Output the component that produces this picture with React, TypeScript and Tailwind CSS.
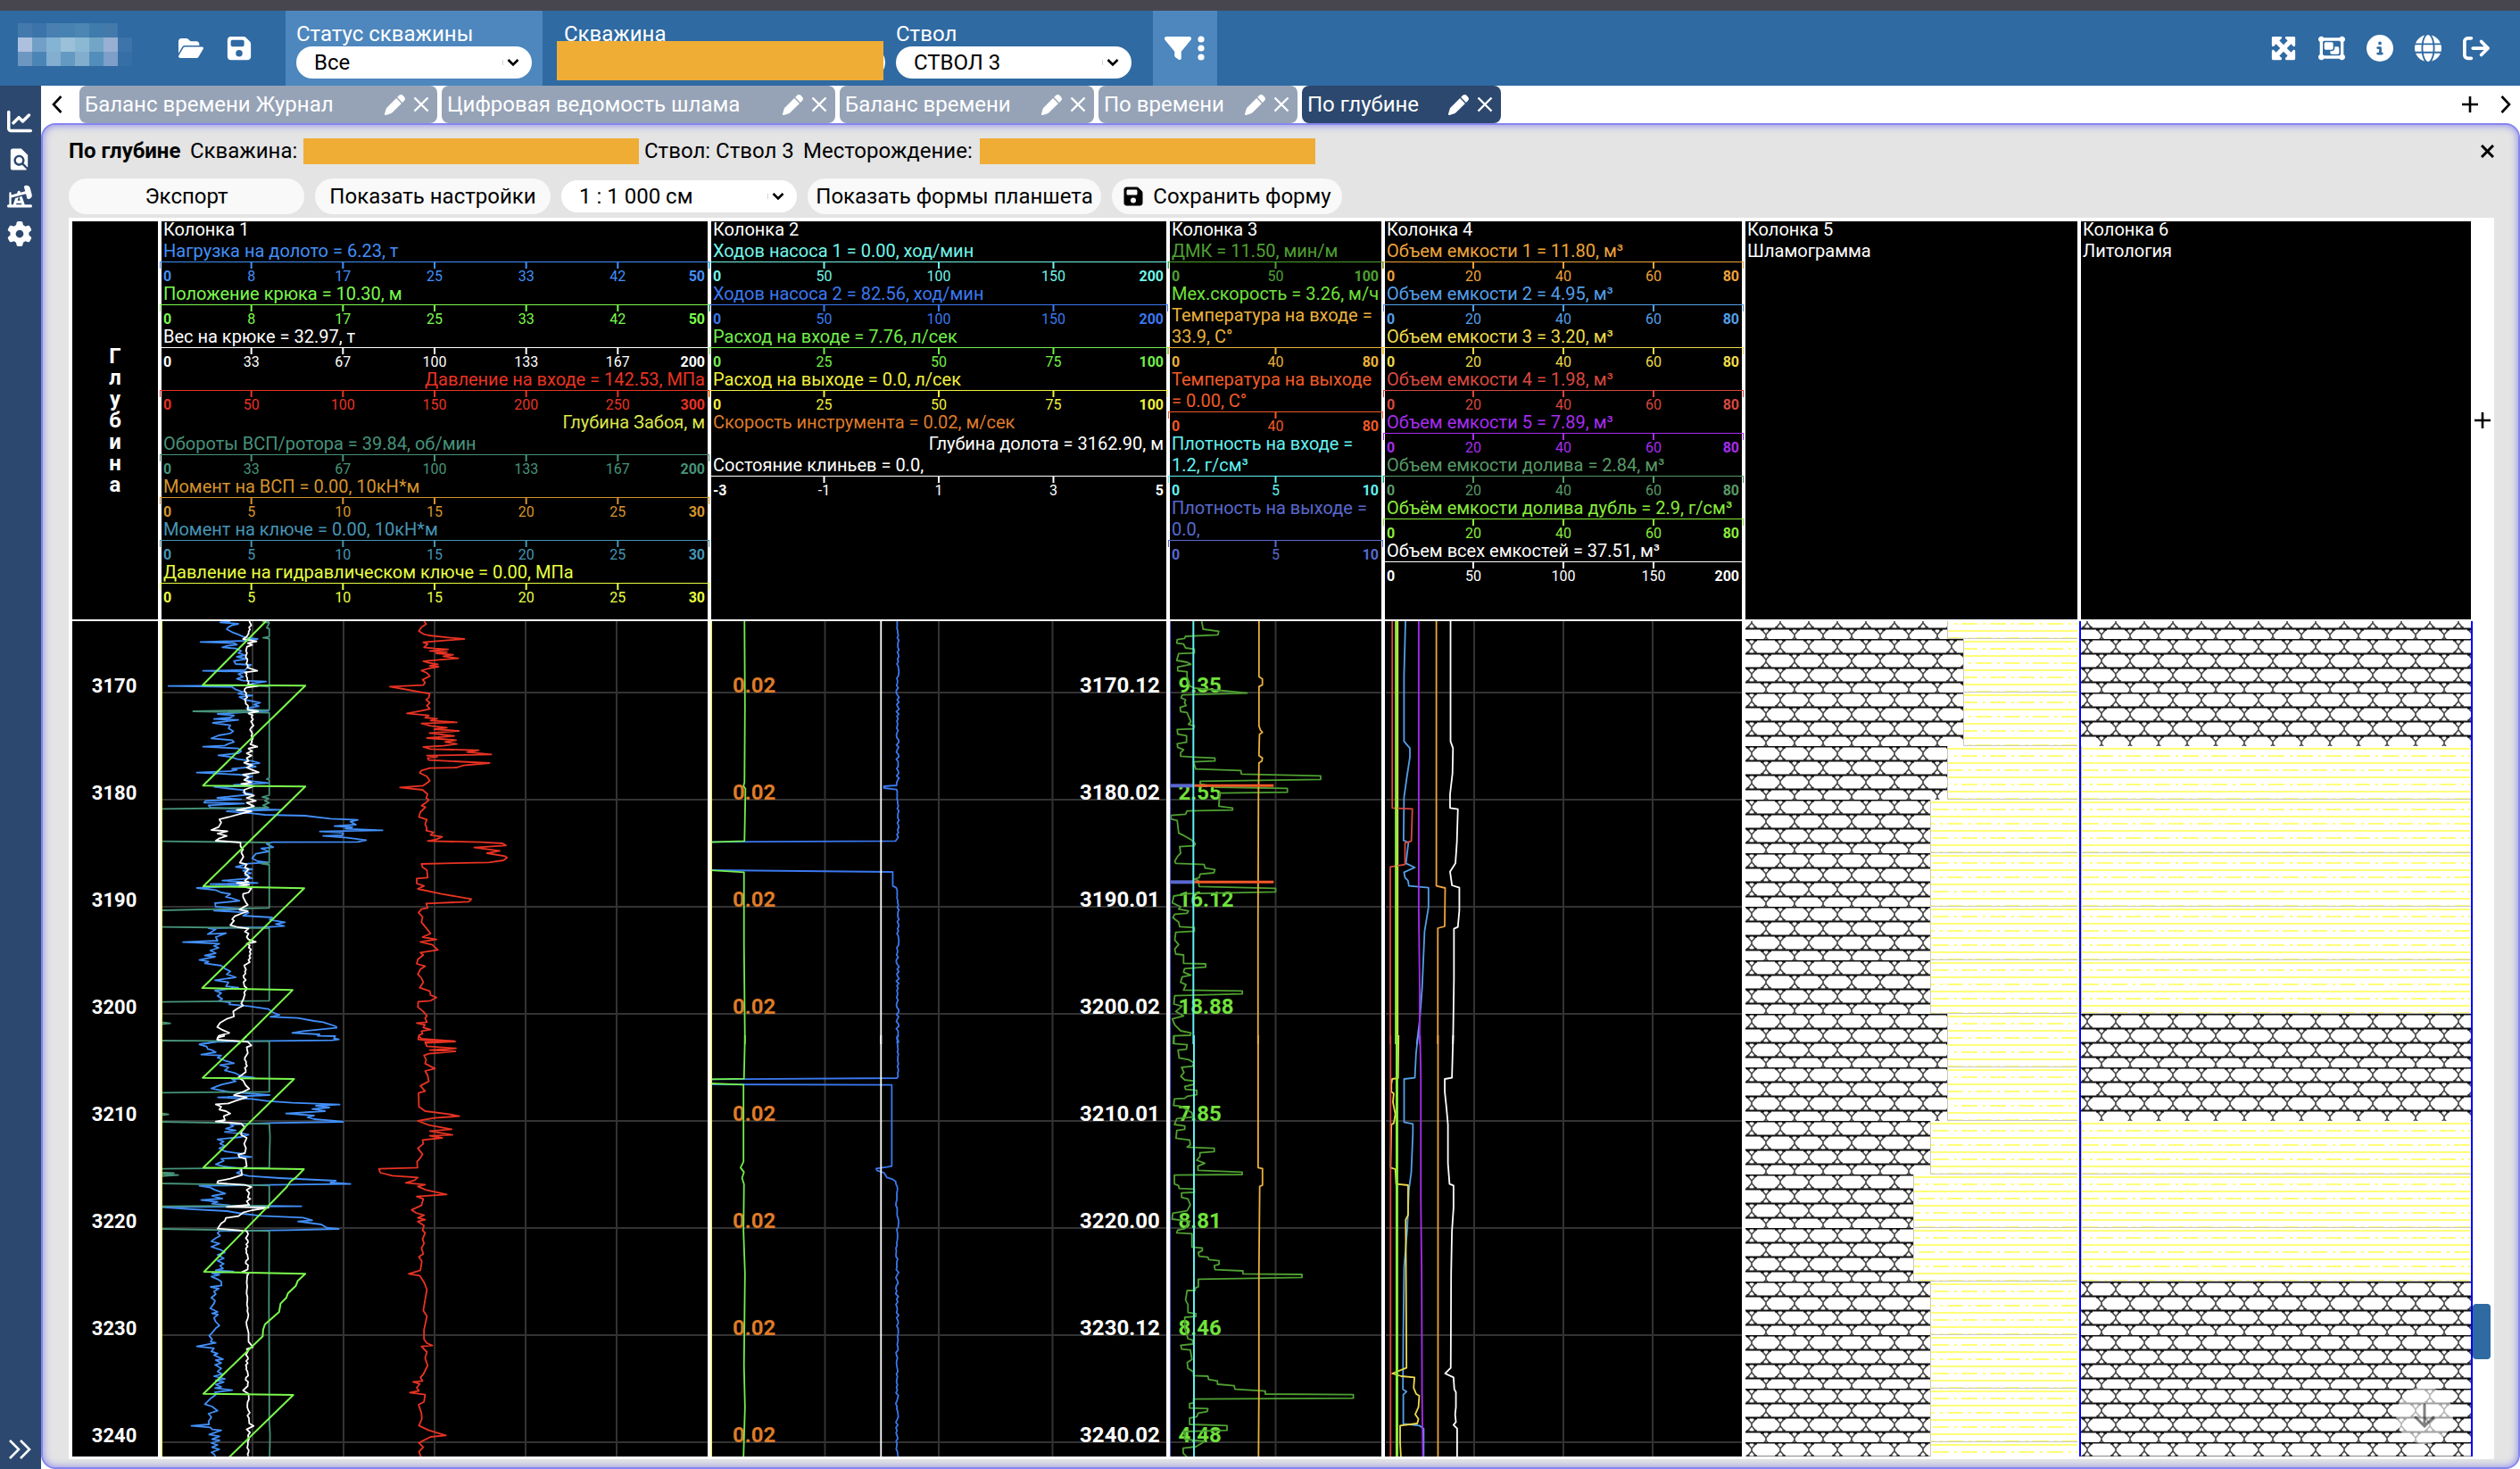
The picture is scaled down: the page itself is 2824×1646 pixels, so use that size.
import type { ReactNode } from "react";
import {
  FaArrowRightFromBracket,
  FaChartLine,
  FaCircleInfo,
  FaFilter,
  FaFloppyDisk,
  FaFolderOpen,
  FaGear,
  FaGlobe,
  FaMaximize,
  FaObjectGroup,
  FaOilWell,
  FaPen,
} from "react-icons/fa6";
import { MdFindInPage } from "react-icons/md";
import { clsx } from "clsx";

type Param = {
  label: string;
  color: string;
  ticks?: string[];
  right?: boolean;
};

type Curve = { color: string; width?: number; upper?: string; lower?: string };

const tabs = [
  { name: "Баланс времени Журнал", width: "w-[401px]" },
  { name: "Цифровая ведомость шлама", width: "w-[441px]" },
  { name: "Баланс времени", width: "w-[285px]" },
  { name: "По времени", width: "w-[223px]" },
  { name: "По глубине", width: "w-[223px]", active: true },
];

const logoCells = [
  "#4379ad", "#3b74aa", "#4a80b1", "#4683b2", "#4c86b3", "#3f7cad", "#4379ab", "#2f6aa2",
  "#adc1de", "#729fc8", "#85b3d3", "#9bc1d8", "#8bb8d3", "#73a6c6", "#98b0d3", "#3d74a9",
  "#6d97c0", "#4a85b5", "#83aed0", "#6499c1", "#83adcd", "#528ebb", "#7d9fc9", "#366fa5",
];

const t50 = ["0", "8", "17", "25", "33", "42", "50"];
const t200 = ["0", "33", "67", "100", "133", "167", "200"];
const t30 = ["0", "5", "10", "15", "20", "25", "30"];
const t80 = ["0", "20", "40", "60", "80"];

const column1: Param[] = [
  { label: "Нагрузка на долото = 6.23, т", color: "#428ff8", ticks: t50 },
  { label: "Положение крюка = 10.30, м", color: "#7bf94d", ticks: t50 },
  { label: "Вес на крюке = 32.97, т", color: "#ffffff", ticks: t200 },
  {
    label: "Давление на входе = 142.53, МПа",
    color: "#e93323",
    ticks: ["0", "50", "100", "150", "200", "250", "300"],
    right: true,
  },
  { label: "Глубина Забоя, м", color: "#dce64a", right: true },
  { label: "Обороты ВСП/ротора = 39.84, об/мин", color: "#47937a", ticks: t200 },
  { label: "Момент на ВСП = 0.00, 10кН*м", color: "#d6942d", ticks: t30 },
  { label: "Момент на ключе = 0.00, 10кН*м", color: "#4695b5", ticks: t30 },
  { label: "Давление на гидравлическом ключе = 0.00, МПа", color: "#e8ff3f", ticks: t30 },
];

const column2: Param[] = [
  { label: "Ходов насоса 1 = 0.00, ход/мин", color: "#72f6ea", ticks: ["0", "50", "100", "150", "200"] },
  { label: "Ходов насоса 2 = 82.56, ход/мин", color: "#3b78f0", ticks: ["0", "50", "100", "150", "200"] },
  { label: "Расход на входе = 7.76, л/сек", color: "#73ee4b", ticks: ["0", "25", "50", "75", "100"] },
  { label: "Расход на выходе = 0.0, л/сек", color: "#f2f03c", ticks: ["0", "25", "50", "75", "100"] },
  { label: "Скорость инструмента = 0.02, м/сек", color: "#df7b28" },
  { label: "Глубина долота = 3162.90, м", color: "#ffffff", right: true },
  { label: "Состояние клиньев = 0.0,", color: "#ffffff", ticks: ["-3", "-1", "1", "3", "5"] },
];

const column3: Param[] = [
  { label: "ДМК = 11.50, мин/м", color: "#4fa032", ticks: ["0", "50", "100"] },
  { label: "Мех.скорость = 3.26, м/ч", color: "#71e23c" },
  { label: "Температура на входе = 33.9, C°", color: "#eab13c", ticks: ["0", "40", "80"] },
  { label: "Температура на выходе = 0.00, C°", color: "#f05a28", ticks: ["0", "40", "80"] },
  { label: "Плотность на входе = 1.2, г/см³", color: "#62f2f2", ticks: ["0", "5", "10"] },
  { label: "Плотность на выходе = 0.0,", color: "#5969cf", ticks: ["0", "5", "10"] },
];

const column4: Param[] = [
  { label: "Объем емкости 1 = 11.80, м³", color: "#efa33a", ticks: t80 },
  { label: "Объем емкости 2 = 4.95, м³", color: "#539fe8", ticks: t80 },
  { label: "Объем емкости 3 = 3.20, м³", color: "#eddb4b", ticks: t80 },
  { label: "Объем емкости 4 = 1.98, м³", color: "#d9483f", ticks: t80 },
  { label: "Объем емкости 5 = 7.89, м³", color: "#a82cf0", ticks: t80 },
  { label: "Объем емкости долива = 2.84, м³", color: "#589966", ticks: t80 },
  { label: "Объём емкости долива дубль = 2.9, г/см³", color: "#8aec3c", ticks: t80 },
  { label: "Объем всех емкостей = 37.51, м³", color: "#ffffff", ticks: ["0", "50", "100", "150", "200"] },
];

const depths = ["3170", "3180", "3190", "3200", "3210", "3220", "3230", "3240"];
const bitDepths = ["3170.12", "3180.02", "3190.01", "3200.02", "3210.01", "3220.00", "3230.12", "3240.02"];
const speeds = ["9.35", "2.55", "16.12", "18.88", "7.85", "8.81", "8.46", "4.48"];

// small repeatable noise around a vertical line
function wobble(x: number, from: number, to: number, amp: number, step = 7) {
  const out: string[] = [];
  for (let y = from, i = 0; y <= to; y += step, i++) {
    const n = Math.sin(i * 12.9898 + x) * 43758.5453;
    out.push(`${(x + (n - Math.floor(n) - 0.5) * 2 * amp).toFixed(1)},${y}`);
  }
  return out.join(" ");
}

const curves1: Curve[] = [
  {
    color: "#428ff8",
    upper:
      "240,18 212,22 262,27 245,32 235,38 230,45 245,55 260,62 275,70 290,75 315,78 280,84 158,88 250,92 258,97 232,101 218,106 255,110 270,118 262,125 280,132 258,138 285,145 250,152 255,162 297,165 290,172 280,182 165,185 285,188 262,196 275,205 258,212 275,218 338,221 300,228 290,234 70,236 245,239 255,248 275,256 262,262 300,268 265,273 280,282 322,292 305,298 318,304 285,310 300,315 345,320 240,327 205,330 250,335 240,342 195,347 262,350 192,360 240,368 235,378 248,388 240,395 208,402 188,412 245,418 250,424 235,430 225,436 165,440 262,446 270,455 262,462 207,469 240,474 260,482 300,488 320,495 285,500 310,507 245,514 258,518 240,522 148,527 265,534 300,540 280,550 300,556 345,562 250,568 300,572 196,575 245,582 278,586 275,594 300,600 204,612 270,617 172,622 168,628 278,631 180,637 186,645 240,648 380,652 230,657 300,664 335,669 445,672 515,682 590,686 570,692 585,702 526,707 575,711 556,716 658,721 486,725 550,730 548,738 495,740 560,746 613,754 590,760 355,761 340,767 358,778 325,782 345,792 310,800 300,815 315,825 345,829 290,833 255,844 300,852 275,857 297,865 280,872 300,882 218,890 315,898 185,902 285,907 148,915 200,922 215,930 240,935 228,945 245,950 265,958 198,966 200,978 285,985 195,991 290,998 275,1008 355,1014 348,1022 390,1030 365,1036 388,1043 330,1047 180,1050 200,1054 178,1070 228,1067 200,1080 205,1092 110,1097 210,1102 195,1110 208,1116 185,1125 200,1134 170,1142 198,1146 155,1157 180,1162 170,1168 215,1176 225,1186 240,1195 230,1205 255,1215 198,1225 235,1232 228,1245 262,1250 198,1260 215,1268 205,1278 218,1288 208,1295 240,1300 237,1306 290,1312 345,1322 355,1332 375,1342 350,1348 425,1352 470,1362 495,1366 530,1380 532,1385 440,1396 410,1402 485,1407 480,1412 528,1413 525,1420 538,1424 520,1427 347,1429 200,1432 155,1440",
    lower:
      "200,22 155,31 175,38 178,46 190,50 200,57 160,65 215,68 205,75 225,85 250,94 212,100 235,108 225,118 255,128 270,138 305,142 270,146 245,148 255,155 215,166 188,179 235,190 348,201 206,209 300,214 340,221 410,227 540,233 475,237 512,243 465,248 500,255 393,263 470,270 452,276 470,282 520,287 550,291 347,295 240,300 248,306 228,314 255,320 225,325 270,330 290,334 270,342 205,350 222,357 212,364 225,372 210,380 225,390 270,398 265,404 298,409 215,415 222,422 200,434 222,441 262,447 270,455 258,463 290,473 375,480 530,489 515,495 570,500 347,503 155,506 185,512 198,520 226,532 190,540 218,549 160,554 205,560 190,566 240,572 435,575 50,578 120,584 230,591 275,600 325,607 440,613 465,622 426,626 490,636 505,647 538,651 400,655 210,658 205,665 212,674 200,682 188,693 210,700 188,711 215,722 225,730 205,738 222,750 205,758 222,768 212,775 220,784 200,790 248,794 190,800 210,805 188,811 205,820 215,828 216,841 186,846 208,852 195,861 200,870 188,882 198,892 195,902 185,918 205,930 190,935 206,939 195,950 200,963 210,976 200,985 190,1000 182,1010 190,1022 186,1030 200,1034 148,1046 195,1052 188,1063 205,1070 195,1075 220,1089 200,1092 215,1102 198,1108 215,1120 205,1130 218,1139 195,1146 225,1155 200,1160 222,1166 200,1174 215,1182 198,1186 245,1193 198,1200 200,1208 185,1222 170,1240 190,1248 205,1262 180,1272 188,1284 180,1298 182,1308 133,1313 185,1318 190,1325 215,1328 182,1342 210,1348 190,1358 210,1362 188,1371 205,1377 190,1385 210,1392 188,1402 195,1408 200,1418",
  },
  {
    color: "#47937a",
    upper:
      "347,18 330,20 347,24 340,40 347,44 347,70 330,74 347,77 347,234 310,236 347,238 347,316 138,321 347,326 347,545 340,549 347,552 347,603 328,609 345,614 335,622 347,628 330,637 345,645 50,649",
  },
  { color: "#47937a", upper: "50,758 347,762 347,830 325,833 347,837 347,982 50,990" },
  { color: "#47937a", upper: "50,1046 347,1050 347,1294 50,1298" },
  { color: "#47937a", upper: "50,1366 75,1370 50,1373 50,1392", lower: "50,18 347,20 347,190 50,193 50,262 70,266 50,269" },
  { color: "#47937a", lower: "50,291 347,298 349,340 347,445 50,449 50,461 85,463 55,467 97,470 50,474 50,478 50,498 347,505 347,572 50,575" },
  { color: "#47937a", lower: "50,651 347,658 346,900 347,1100 347,1300 349,1340 348,1418" },
  {
    color: "#ffffff",
    upper:
      wobble(295, 18, 62, 5) +
      " 285,70 275,78 312,86 288,92 300,98 " +
      wobble(287, 104, 180, 6) +
      " 314,185 280,190 " +
      wobble(285, 195, 230, 7) +
      " 316,236 285,241 " +
      wobble(283, 246, 316, 6) +
      " 316,321 290,328 " +
      wobble(298, 334, 436, 6) +
      " 314,440 290,446 300,455 285,462 298,470 285,478 290,488 278,494 300,502 285,510 300,518 318,526 275,534 290,542 278,552 298,560 270,565 305,573 278,585 280,598 305,604 285,612 310,622 285,628 305,640 280,648 258,653 298,657 270,665 240,675 210,684 215,695 208,710 188,720 232,724 205,732 230,740 210,748 200,756 " +
      "268,762 268,775 275,785 270,795 276,810 266,830 285,835 280,846 290,852 280,865 292,878 280,890 290,895 258,898 292,904 265,908 298,916 290,930 275,935 275,945 282,962 288,972 275,980 265,988 288,993 268,1002 252,1010 245,1020 250,1025 240,1040 262,1047 290,1051 280,1062 290,1068 285,1080 290,1088 310,1096 285,1102 " +
      wobble(294, 1108, 1170, 5) +
      " " +
      wobble(281, 1175, 1292, 5) +
      " 270,1303 275,1310 260,1320 248,1330 250,1347 230,1355 212,1368 204,1382 215,1390 237,1402 208,1412 204,1426",
    lower:
      "225,2 205,8 204,15 288,22 298,34 285,40 288,60 " +
      wobble(283, 75, 125, 5) +
      " 262,142 275,152 282,168 292,180 275,190 250,201 285,209 255,220 235,229 200,232 215,240 210,250 228,255 240,263 222,272 225,285 200,290 270,297 280,310 270,325 270,335 285,345 278,365 283,380 280,396 262,401 265,410 282,415 285,440 270,450 272,470 240,482 206,490 204,497 280,503 298,510 285,520 292,530 288,545 295,550 285,558 292,570 230,577 345,579 300,588 275,596 262,608 228,614 225,624 215,632 205,650 285,658 " +
      wobble(286, 668, 790, 4) +
      " 272,796 290,801 " +
      wobble(287, 808, 980, 3, 12) +
      " 290,1000 290,1030 302,1048 285,1055 " +
      wobble(286, 1060, 1185, 4) +
      " 275,1194 290,1205 " +
      wobble(290, 1215, 1305, 4, 9) +
      " 304,1313 285,1325 294,1335 " +
      wobble(289, 1345, 1418, 3),
  },
  {
    color: "#7bf94d",
    width: 2,
    upper: "338,18 164,233 446,235 165,571 446,574 166,909 443,916 163,1251 411,1258 262,1440",
    lower:
      "285,2 164,143 415,147 166,445 442,450 420,478 405,492 395,510 168,795 446,802 425,826 420,842 398,868 394,882 378,902 374,930 335,972 330,990 329,1012 166,1205 413,1209 237,1418",
  },
  {
    color: "#e93323",
    upper:
      "772,18 778,28 765,38 758,52 772,62 785,66 845,74 883,78 830,83 770,89 782,95 772,106 802,110 838,113 788,118 835,122 805,126 852,131 825,136 866,143 805,149 770,153 785,158 810,163 788,168 812,171 785,177 765,184 780,192 788,203 768,215 775,224 770,233 678,238 715,246 788,262 785,275 778,282 788,292 780,302 788,313 762,320 725,328 785,335 775,342 808,346 790,352 862,358 765,362 790,370 835,376 800,381 868,387 787,394 855,404 780,411 860,418 830,424 862,431 825,437 770,441 790,448 922,452 890,458 957,466 780,470 808,474 782,478 785,485 952,495 880,503 862,510 788,512 765,520 760,528 780,540 788,555 770,571 706,577 768,585 782,600 778,612 785,620 775,630 765,638 776,643 762,660 758,676 780,685 775,700 780,715 778,722 798,728 790,737 822,743 805,752 782,757 930,761 988,765 997,772 910,779 980,790 945,798 995,808 1000,813 990,822 950,829 830,832 765,834 768,845 780,855 782,880 752,883 752,900 772,908 755,918 820,935 902,952 895,961 778,967 782,982 765,986 757,998 768,1012 765,1030 775,1045 790,1068 768,1080 806,1088 762,1096 795,1106 810,1123 762,1132 770,1140 755,1155 752,1170 775,1178 762,1188 755,1205 765,1218 770,1232 760,1250 788,1262 790,1275 806,1283 790,1294 756,1297 755,1315 770,1330 780,1345 775,1352 780,1366 752,1369 775,1375 770,1384 790,1391 765,1396 768,1405 758,1410 756,1424 775,1427 857,1431 775,1436",
    lower:
      "758,2 765,12 857,20 775,24 780,37 860,44 788,50 858,54 785,62 772,68 778,82 775,95 802,112 775,120 782,135 785,155 762,170 775,188 757,194 758,240 775,255 840,265 869,272 800,278 755,288 785,302 848,316 788,322 850,335 788,338 822,345 768,352 770,365 755,380 768,400 762,412 753,425 754,445 648,449 652,462 685,472 755,478 745,488 722,496 775,502 755,508 778,520 834,535 752,542 770,550 765,572 738,587 750,597 772,605 755,614 775,620 755,626 772,640 768,655 775,665 768,685 772,700 765,715 770,735 758,745 766,760 762,790 730,802 760,808 772,830 780,855 775,890 770,925 780,945 772,990 772,1022 780,1035 795,1043 765,1046 780,1065 775,1085 782,1110 770,1140 762,1150 768,1162 742,1165 760,1172 752,1185 758,1195 733,1201 775,1208 772,1232 757,1242 765,1270 766,1290 758,1312 785,1328 832,1345 790,1350 758,1370 770,1385 758,1400 764,1418",
  },
];

const curves2: Curve[] = [
  {
    color: "#3b78f0",
    upper:
      wobble(394, 18, 570, 3, 8) +
      " 366,573 366,579 392,584 " +
      wobble(394, 592, 745, 3, 8) +
      " 390,757 12,760",
    lower: "12,165 382,167 382,440 372,443 350,448 352,455 366,462 372,478 384,484 390,492 " + wobble(393, 500, 1418, 3, 9),
  },
  {
    color: "#3b78f0",
    upper: "12,855 384,861 384,908 391,914 " + wobble(394, 924, 1440, 3, 8),
    lower: wobble(394, 0, 145, 2, 8) + " 12,148",
  },
  {
    color: "#73ee4b",
    upper: "81,18 82,300 81,560 79,572 83,582 81,757 12,761",
  },
  { color: "#73ee4b", upper: "12,855 80,862 80,1100 82,1440", lower: "82,0 80,146 12,148" },
  { color: "#73ee4b", lower: "12,162 79,166 79,425 73,445 80,460 76,480 80,500 79,660 82,800 80,1110 82,1250 79,1418" },
  { color: "#ffffff", upper: "360,18 360,1440", lower: "360,0 360,1418" },
];

// lower part of tracks 3 and 4 is digitised on a wider grid, see `lowerScale`
const curves3: Curve[] = [
  {
    color: "#4fa032",
    upper:
      "1015,18 1018,45 1050,52 1048,64 982,69 980,76 965,80 964,92 978,95 982,108 1000,112 1000,125 968,127 964,150 985,156 993,163 966,172 966,185 985,188 985,204 990,235 1000,243 1060,252 1108,260 975,266 973,276 982,282 980,292 983,302 971,308 972,322 985,325 990,345 993,355 988,365 1000,370 998,380 965,382 966,398 984,403 984,425 965,430 966,442 978,450 972,460 972,472 1000,475 1042,478 1042,488 998,491 1003,515 1095,520 1096,532 1258,538 1258,550 1012,556 1012,565 1045,576 1190,580 1190,593 1052,596 1050,640 1078,646 1078,653 985,656 982,667 952,671 952,683 965,688 968,730 980,740 993,752 1002,766 1000,773 970,776 972,798 966,808 960,825 962,832 1020,836 1022,848 1042,853 1040,864 1012,868 1010,880 1000,885 1008,890 1010,910 1166,916 1166,928 985,934 958,942 955,965 972,978 968,986 988,992 985,1000 960,1003 956,1015 968,1030 970,1045 1000,1048 1000,1060 962,1064 960,1090 968,1105 960,1120 962,1137 978,1140 978,1168 1023,1170 1023,1181 980,1186 978,1198 993,1208 975,1214 972,1232 983,1240 978,1258 1098,1261 1098,1271 960,1277 958,1305 975,1312 962,1330 978,1345 955,1355 960,1375 972,1395 993,1402 992,1410 958,1412 957,1440",
    lower:
      "35,0 35,28 68,32 66,47 45,50 48,76 72,82 84,92 82,104 54,108 60,125 52,138 62,150 86,154 85,165 62,172 64,182 92,185 92,200 68,205 62,212 36,214 34,236 50,238 80,260 82,275 42,280 36,300 62,305 62,316 42,320 40,346 74,352 76,368 68,376 136,380 136,391 100,395 100,408 92,420 112,430 95,440 95,454 206,460 206,468 36,470 36,500 46,505 48,515 86,517 86,528 54,530 54,545 70,550 76,570 68,590 32,598 30,618 75,625 62,650 44,655 42,664 80,667 80,712 106,715 106,724 96,730 98,743 120,746 122,754 148,758 148,770 136,774 138,788 208,792 208,802 356,804 356,814 96,820 96,845 88,850 88,858 68,858 64,890 70,905 70,932 90,936 90,945 62,948 62,985 70,1020 82,1025 82,1038 52,1042 54,1055 76,1058 80,1090 68,1100 70,1120 84,1132 84,1144 120,1146 122,1157 144,1162 144,1173 186,1178 188,1190 264,1196 264,1206 485,1208 485,1220 84,1223 84,1236 74,1238 74,1253 120,1255 118,1265 96,1270 92,1282 74,1287 74,1308 168,1312 168,1328 60,1332 62,1358 112,1365 90,1383 58,1388 58,1405 68,1418",
  },
  {
    color: "#eab13c",
    upper: "1132,18 1132,205 1139,212 1139,232 1132,238 1132,370 1135,384 1139,392 1133,398 1132,470 1139,478 1138,488 1132,494 1131,600 1130,1040 1130,1440",
    lower: "246,0 246,445 257,448 257,504 250,508 248,800 248,1210 247,1418",
  },
  { color: "#f05a28", width: 3, upper: "1000,571 1162,571" },
  { color: "#f05a28", width: 3, upper: "1000,895 1162,895" },
  { color: "#5969cf", width: 4, upper: "949,571 1000,571" },
  { color: "#5969cf", width: 4, upper: "949,895 1000,895" },
  { color: "#62f2f2", width: 2, upper: "998,18 998,1440", lower: "85,0 85,1418" },
];

const curves4: Curve[] = [
  {
    color: "#539fe8",
    upper:
      "1431,18 1428,200 1428,422 1440,445 1440,475 1434,540 1428,610 1427,755 1437,762 1432,832 1450,846 1428,862 1430,880 1436,890 1438,908 1478,914 1478,980 1470,1060 1465,1250 1460,1360 1454,1440",
    lower:
      "647,0 642,60 639,143 612,147 612,292 634,298 634,330 630,460 624,520 620,650 612,780 610,1000 609,1190 618,1198 610,1208 610,1306 650,1312 661,1322 661,1418",
  },
  {
    color: "#a82cf0",
    upper: "1458,18 1458,980 1460,1250 1460,1440",
    lower: "652,0 654,140 654,560 656,800 657,1200 659,1418",
  },
  {
    color: "#eddb4b",
    upper: "1415,18 1415,1440",
    lower:
      "598,0 597,144 582,147 580,165 580,190 586,196 584,225 590,265 586,296 580,300 578,445 590,450 592,500 622,504 622,605 616,620 618,1118 582,1137 605,1146 638,1150 636,1185 642,1205 650,1212 648,1250 640,1274 648,1290 645,1305 602,1312 602,1370 604,1418",
  },
  {
    color: "#d9483f",
    upper: "1404,18 1404,646 1445,649 1443,757 1430,764 1430,836 1400,844 1400,1440",
    lower: "578,0 578,1418",
  },
  { color: "#8aec3c", width: 3, upper: "1412,18 1412,1440", lower: "594,0 594,1418" },
  {
    color: "#efa33a",
    upper: "1494,18 1494,908 1512,915 1511,1044 1497,1050 1497,1440",
    lower: "697,0 697,1418",
  },
  {
    color: "#ffffff",
    upper:
      "1523,18 1523,422 1528,445 1527,530 1522,600 1522,646 1538,650 1536,760 1533,832 1522,860 1526,906 1541,914 1541,990 1538,1046 1530,1052 1530,1220 1528,1440",
    lower:
      "735,0 732,143 714,147 714,190 718,240 722,300 722,430 726,500 736,505 736,580 732,660 730,800 729,1118 715,1137 736,1150 738,1190 742,1200 742,1250 740,1275 742,1300 736,1310 745,1322 745,1418",
  },
];

// x of the boundary between limestone and sand, one value per 5 m sample
const cuttings = [226, 244, 244, 226, 207, 207, 207, 207, 226, 226, 207, 188, 188, 207, 207, 207, 207];
const lithology = [437, 437, 437, 0, 0, 0, 0, 0, 437, 437, 0, 0, 0, 437, 437, 437, 437];

type SelectProps = { id: string; options: string[]; className?: string; label?: string };

function Select({ id, options, className, label }: SelectProps) {
  return (
    <div className={clsx("grid h-9 items-center", className)}>
      <select
        id={id}
        aria-label={label}
        className="[grid-area:1/1] h-9 w-full appearance-none rounded-full bg-white pl-5 pr-10 text-2xl leading-8 text-black"
      >
        {options.map((o) => (
          <option key={o}>{o}</option>
        ))}
      </select>
      <span className="[grid-area:1/1] pointer-events-none mr-3.5 flex items-center gap-1 justify-self-end">
        <i className="h-1.5 w-px bg-gray-300" />
        <svg width="14" height="10" viewBox="0 0 14 10" fill="none" stroke="#000" strokeWidth="2.6">
          <path d="M1.5 2 7 7.5 12.5 2" />
        </svg>
      </span>
    </div>
  );
}

function HeaderField({ id, label, options }: { id: string; label: string; options: string[] }) {
  return (
    <div className="flex flex-col">
      <label htmlFor={id} className="h-7 text-2xl leading-7 text-white">
        {label}
      </label>
      <Select id={id} options={options} className="w-full" />
    </div>
  );
}

function IconButton({ label, className, children }: { label: string; className?: string; children: ReactNode }) {
  return (
    <button type="button" aria-label={label} className={clsx("flex items-center justify-center", className)}>
      {children}
    </button>
  );
}

function Header() {
  return (
    <header className="flex h-[84px] items-stretch bg-[#2f6aa2] text-white">
      <div className="flex w-80 items-center pl-5">
        <div className="grid grid-cols-[repeat(8,16px)] grid-rows-[repeat(3,16px)] pb-2">
          {logoCells.map((c, i) => (
            <span key={i} style={{ backgroundColor: c }} />
          ))}
        </div>
        <IconButton label="Открыть" className="ml-[50px] w-8">
          <FaFolderOpen size={28} />
        </IconButton>
        <IconButton label="Сохранить" className="ml-6 w-7">
          <FaFloppyDisk size={30} />
        </IconButton>
      </div>
      <div className="w-72 bg-[#4d87be] px-3 pt-3">
        <HeaderField id="status" label="Статус скважины" options={["Все"]} />
      </div>
      <div className="ml-6 w-[360px] pt-3">
        <div className="relative">
          <HeaderField id="well" label="Скважина" options={[""]} />
          <span className="absolute -left-2 top-[22px] h-11 w-[366px] bg-[#efad36]" />
        </div>
      </div>
      <div className="ml-3 w-[264px] pt-3">
        <HeaderField id="bore" label="Ствол" options={["СТВОЛ 3"]} />
      </div>
      <IconButton label="Фильтр" className="ml-6 w-[72px] gap-1.5 bg-[#4d87be]">
        <FaFilter size={30} />
        <svg width="10" height="28" viewBox="0 0 10 28" fill="#fff">
          <circle cx="5" cy="4" r="3.6" />
          <circle cx="5" cy="14" r="3.6" />
          <circle cx="5" cy="24" r="3.6" />
        </svg>
      </IconButton>
      <div className="ml-auto flex items-center gap-6 pr-[34px]">
        <IconButton label="На весь экран" className="w-[30px]">
          <FaMaximize size={30} />
        </IconButton>
        <IconButton label="Группировка" className="w-[30px]">
          <FaObjectGroup size={30} />
        </IconButton>
        <IconButton label="Информация" className="w-[30px]">
          <FaCircleInfo size={30} />
        </IconButton>
        <IconButton label="Язык" className="w-[30px]">
          <FaGlobe size={30} />
        </IconButton>
        <IconButton label="Выход" className="w-[30px]">
          <FaArrowRightFromBracket size={30} />
        </IconButton>
      </div>
    </header>
  );
}

function Sidebar() {
  return (
    <nav className="flex w-[46px] shrink-0 flex-col items-center gap-3.5 bg-[#2c486e] pb-2 pr-[3px] pt-[26px] text-white">
      <IconButton label="Графики" className="h-7">
        <FaChartLine size={28} />
      </IconButton>
      <IconButton label="Поиск" className="h-7">
        <MdFindInPage size={29} />
      </IconButton>
      <IconButton label="Буровая" className="h-7">
        <FaOilWell size={28} />
      </IconButton>
      <IconButton label="Настройки" className="h-7">
        <FaGear size={28} />
      </IconButton>
      <IconButton label="Развернуть" className="mt-auto h-7">
        <svg width="28" height="24" viewBox="0 0 28 24" fill="none" stroke="#fff" strokeWidth="2.6">
          <path d="M3 2l10 10L3 22M15 2l10 10-10 10" />
        </svg>
      </IconButton>
    </nav>
  );
}

function TabBar() {
  return (
    <div className="flex h-[42px] items-stretch bg-white">
      <IconButton label="Назад" className="w-[39px] pr-1">
        <svg width="12" height="20" viewBox="0 0 12 20" fill="none" stroke="#000" strokeWidth="2.6">
          <path d="M10.5 1 2 10l8.5 9" />
        </svg>
      </IconButton>
      <div className="ml-1 flex gap-[5px]">
        {tabs.map((tab) => (
          <div
            key={tab.name}
            className={clsx(
              "flex items-center rounded-lg pl-1.5 pr-2 text-2xl text-white",
              tab.width,
              tab.active ? "bg-[#2c486e]" : "bg-[#96a3b7]"
            )}
          >
            <a href="#" className="whitespace-nowrap">
              {tab.name}
            </a>
            <IconButton label="Изменить" className="ml-auto w-6">
              <FaPen size={23} />
            </IconButton>
            <IconButton label="Закрыть" className="ml-2 w-5">
              <svg width="18" height="18" viewBox="0 0 18 18" stroke="currentColor" strokeWidth="2.4">
                <path d="M1.5 1.5l15 15M16.5 1.5l-15 15" />
              </svg>
            </IconButton>
          </div>
        ))}
      </div>
      <IconButton label="Добавить" className="ml-auto w-6">
        <svg width="18" height="18" viewBox="0 0 18 18" stroke="#000" strokeWidth="2.6">
          <path d="M9 0v18M0 9h18" />
        </svg>
      </IconButton>
      <IconButton label="Вперёд" className="ml-5 mr-2 w-4">
        <svg width="12" height="20" viewBox="0 0 12 20" fill="none" stroke="#000" strokeWidth="2.6">
          <path d="M1.5 1 10 10l-8.5 9" />
        </svg>
      </IconButton>
    </div>
  );
}

function Axis({ ticks, color }: { ticks: string[]; color: string }) {
  const last = ticks.length - 1;
  return (
    <div className="-mx-0.5">
      <svg className="block h-6 w-full overflow-visible" fill={color} stroke="none" fontSize="16">
        <rect width="100%" height="1" />
        {ticks.map((t, i) => {
          const edge = i === 0 || i === last;
          return (
            <g key={i} transform={i === 0 ? undefined : "translate(-1 0)"}>
              <rect x={`${(i / last) * 100}%`} width={edge ? 1 : 2} height="8" />
              <text
                x={`${(i / last) * 100}%`}
                dx={i === 0 ? 4 : i === last ? -4 : 1}
                y="22"
                textAnchor={i === 0 ? "start" : i === last ? "end" : "middle"}
                fontWeight={edge ? 700 : 400}
              >
                {t}
              </text>
            </g>
          );
        })}
      </svg>
    </div>
  );
}

function TrackHeader({ title, params = [], note }: { title: string; params?: Param[]; note?: string }) {
  return (
    <div className="min-h-[446px] min-w-0 bg-black text-xl leading-6 text-white">
      <div className="h-[21px] px-0.5 leading-[18px]">{title}</div>
      {note && <div className="px-0.5">{note}</div>}
      {params.map((p) => (
        <div key={p.label} style={{ color: p.color }}>
          <div className={p.right ? "pr-[3px] text-right" : "pl-0.5"}>{p.label}</div>
          {p.ticks && <Axis ticks={p.ticks} color={p.color} />}
        </div>
      ))}
    </div>
  );
}

type TrackProps = {
  viewBox: string;
  curves: Curve[];
  divisions: number;
  lowerScale?: string;
  edge: string;
  children?: ReactNode;
};

function Track({ viewBox, curves, divisions, lowerScale, edge, children }: TrackProps) {
  return (
    <div className="h-[936px] min-w-0 bg-black">
      <svg className="block h-full w-full" fontSize="24">
        <g fill="#333333">
          {depths.map((d, i) => (
            <rect key={d} y={79 + i * 120} width="100%" height="2" />
          ))}
          <g transform="translate(-1 0)">
            {Array.from({ length: divisions - 1 }, (_, i) => (
              <rect key={i} x={`${((i + 1) / divisions) * 100}%`} width="2" height="100%" />
            ))}
          </g>
        </g>
        {children}
        <svg width="100%" height="100%" viewBox={viewBox} preserveAspectRatio="none" fill="none" strokeLinejoin="round">
          {curves.map((c, i) => (
            <g key={i} stroke={c.color} strokeWidth={c.width ?? 1.8}>
              {c.upper && <polyline points={c.upper} vectorEffect="non-scaling-stroke" />}
              {c.lower && (
                <g transform={lowerScale ?? "translate(0 1410)"}>
                  <polyline points={c.lower} vectorEffect="non-scaling-stroke" />
                </g>
              )}
            </g>
          ))}
        </svg>
        <rect width="1" height="100%" fill={edge} />
      </svg>
    </div>
  );
}

function Rocks({ bounds, width }: { bounds: number[]; width: number }) {
  return (
    <div className="h-[936px] min-w-0 bg-white">
      <svg className="block h-full w-full" viewBox={`0 0 ${width} 936`} preserveAspectRatio="none">
        {bounds.map((x, i) => (
          <g key={i} transform={`translate(0 ${i * 60 - 40})`}>
            {x > 0 && <rect width={x} height="60" fill="url(#limestone)" />}
            {x < width && (
              <g>
                <rect x={x} width={width - x} height="60" fill="url(#sand)" />
                <path d={`M${x + 0.5} 0V59.5H${width}`} fill="none" stroke="#c8c8c0" />
              </g>
            )}
          </g>
        ))}
      </svg>
    </div>
  );
}

function RockPatterns() {
  return (
    <svg className="absolute h-0 w-0" aria-hidden="true">
      <defs>
        <pattern id="limestone" width="32" height="32" patternUnits="userSpaceOnUse">
          <rect width="32" height="32" fill="#fff" />
          <g fill="none" stroke="#484848" strokeWidth="1.7">
            <path d="M2 1.5 7 7v3L2 15.5M12 1.5 7 7M7 10l5 5.5" />
            <path d="M18 17.5 23 23v3l-5 5.5M28 17.5 23 23M23 26l5 5.5" />
          </g>
          <g fill="#111">
            <rect width="32" height="1.5" />
            <rect y="15.5" width="32" height="2" />
            <rect y="31.5" width="32" height=".5" />
            <path d="M1 1h4v1.500H1zM9 1h4v1.500H9zM1 14.500h4v1H1zM9 14.500h4v1H9zM17 17h4v1.500h-4zM25 17h4v1.500h-4zM17 30.500h4v1h-4zM25 30.500h4v1h-4z" />
          </g>
        </pattern>
        <pattern id="sand" width="32" height="32" patternUnits="userSpaceOnUse">
          <rect width="32" height="32" fill="#fff" />
          <g fill="#ffff78">
            <rect y="2" width="32" height="2" />
            <rect y="18" width="32" height="2" />
            <path d="M18 10h14v2H18zM0 10h4v2H0zM10 10h3v2h-3zM2 26h18v2H2zM26 26h3v2h-3z" />
          </g>
        </pattern>
      </defs>
    </svg>
  );
}

function DepthLabels({ values, x, color }: { values: string[]; x: string; color: string }) {
  return (
    <g fill={color} fontWeight="700">
      {values.map((v, i) => (
        <text key={i} x={x} y={80 + i * 120}>
          {v}
        </text>
      ))}
    </g>
  );
}

function Planshet() {
  return (
    <section className="flex flex-1 bg-white pb-[3px] pl-1 pt-1">
      <RockPatterns />
      <div className="grid flex-1 grid-cols-[96fr_612fr_510fr_237fr_400fr_372fr_437fr] content-start gap-x-1 gap-y-0.5">
        <div className="flex flex-col items-center justify-center bg-black text-2xl font-bold leading-6 text-white">
          {"Глубина".split("").map((c, i) => (
            <span key={i}>{c}</span>
          ))}
        </div>
        <TrackHeader title="Колонка 1" params={column1} />
        <TrackHeader title="Колонка 2" params={column2} />
        <TrackHeader title="Колонка 3" params={column3} />
        <TrackHeader title="Колонка 4" params={column4} />
        <TrackHeader title="Колонка 5" note="Шламограмма" />
        <TrackHeader title="Колонка 6" note="Литология" />

        <div className="h-[936px] bg-black">
          <svg className="block h-full w-full" fontSize="22" fontWeight="700" fill="#fff" textAnchor="middle">
            {depths.map((d, i) => (
              <text key={d} x="49%" y={80 + i * 120}>
                {d}
              </text>
            ))}
          </svg>
        </div>
        <Track viewBox="51 18 1500 2808" curves={curves1} divisions={6} edge="#e8ff3f" />
        <Track viewBox="13 18 930 2808" curves={curves2} divisions={4} edge="#f2f03c">
          <DepthLabels values={speeds.map(() => "0.02")} x="4.7%" color="#df7b28" />
          <DepthLabels values={bitDepths} x="81%" color="#fff" />
        </Track>
        <Track
          viewBox="950 18 432 2808"
          curves={curves3}
          divisions={2}
          lowerScale="translate(930 1410) scale(0.814 1)"
          edge="#5969cf"
        >
          <DepthLabels values={speeds} x="4%" color="#71e23c" />
        </Track>
        <Track
          viewBox="1389 18 729 2808"
          curves={curves4}
          divisions={4}
          lowerScale="translate(930 1410) scale(0.814 1)"
          edge="#000"
        />
        <Rocks bounds={cuttings} width={372} />
        <div className="relative -ml-0.5 border-l-2 border-[#0000ff]">
          <Rocks bounds={lithology} width={437} />
          <button
            type="button"
            aria-label="Вниз"
            className="absolute bottom-3.5 right-5 flex h-16 w-16 items-center justify-center rounded-full bg-white/60"
          >
            <svg width="24" height="28" viewBox="0 0 24 28" fill="none" stroke="#000" strokeOpacity=".5" strokeWidth="3" strokeLinecap="round">
              <path d="M12 2v23M2 16l10 10 10-10" />
            </svg>
          </button>
        </div>
      </div>
      <div className="flex w-[26px] flex-col">
        <button type="button" aria-label="Добавить колонку" className="flex h-[446px] items-center justify-center">
          <svg width="18" height="18" viewBox="0 0 18 18" stroke="#000" strokeWidth="2.6">
            <path d="M9 0v18M0 9h18" />
          </svg>
        </button>
        <div className="mt-0.5 flex-1 border-l-2 border-[#0000ff]">
          <div className="mt-[765px] h-[62px] w-5 rounded bg-[#2f6aa2]" />
        </div>
      </div>
    </section>
  );
}

const buttonClass = "flex h-10 items-center justify-center rounded-[20px] bg-[#f9f9f9] text-2xl";

export default function App() {
  return (
    <div className="min-h-screen bg-black font-['Roboto',sans-serif] text-black">
      <div className="h-3 bg-[#47464f]" />
      <Header />
      <div className="flex">
        <Sidebar />
        <div className="flex min-w-0 flex-1 flex-col bg-white">
          <TabBar />
          <main className="flex flex-1 flex-col rounded-2xl border-2 border-[#8585ee] bg-[#e4e4e4] pb-[9px] pl-[29px] pr-[27px] pt-[13px] shadow-[inset_0_0_10px_#8585ee]">
            <div className="flex h-8 items-center text-2xl">
              <h1 className="w-[136px] font-bold">По глубине</h1>
              <span className="w-[127px]">Скважина:</span>
              <span className="h-[29px] w-[376px] bg-[#efad36]" />
              <span className="ml-1.5 w-[178px]">Ствол: Ствол 3</span>
              <span className="w-[198px]">Месторождение:</span>
              <span className="h-[29px] w-[376px] bg-[#efad36]" />
              <IconButton label="Закрыть форму" className="ml-auto w-4">
                <svg width="15" height="15" viewBox="0 0 15 15" stroke="#000" strokeWidth="3">
                  <path d="M1 1l13 13M14 1 1 14" />
                </svg>
              </IconButton>
            </div>
            <div className="mt-[15px] flex items-center gap-3">
              <button type="button" className={clsx(buttonClass, "w-[264px]")}>
                Экспорт
              </button>
              <button type="button" className={clsx(buttonClass, "w-[264px]")}>
                Показать настройки
              </button>
              <Select id="scale" label="Масштаб" options={["1 : 1 000 см"]} className="w-[264px]" />
              <button type="button" className={clsx(buttonClass, "w-[329px]")}>
                Показать формы планшета
              </button>
              <button type="button" className={clsx(buttonClass, "w-[258px] gap-2.5")}>
                <FaFloppyDisk size={24} />
                Сохранить форму
              </button>
            </div>
            <div className="mt-1 flex">
              <Planshet />
            </div>
          </main>
        </div>
      </div>
    </div>
  );
}
